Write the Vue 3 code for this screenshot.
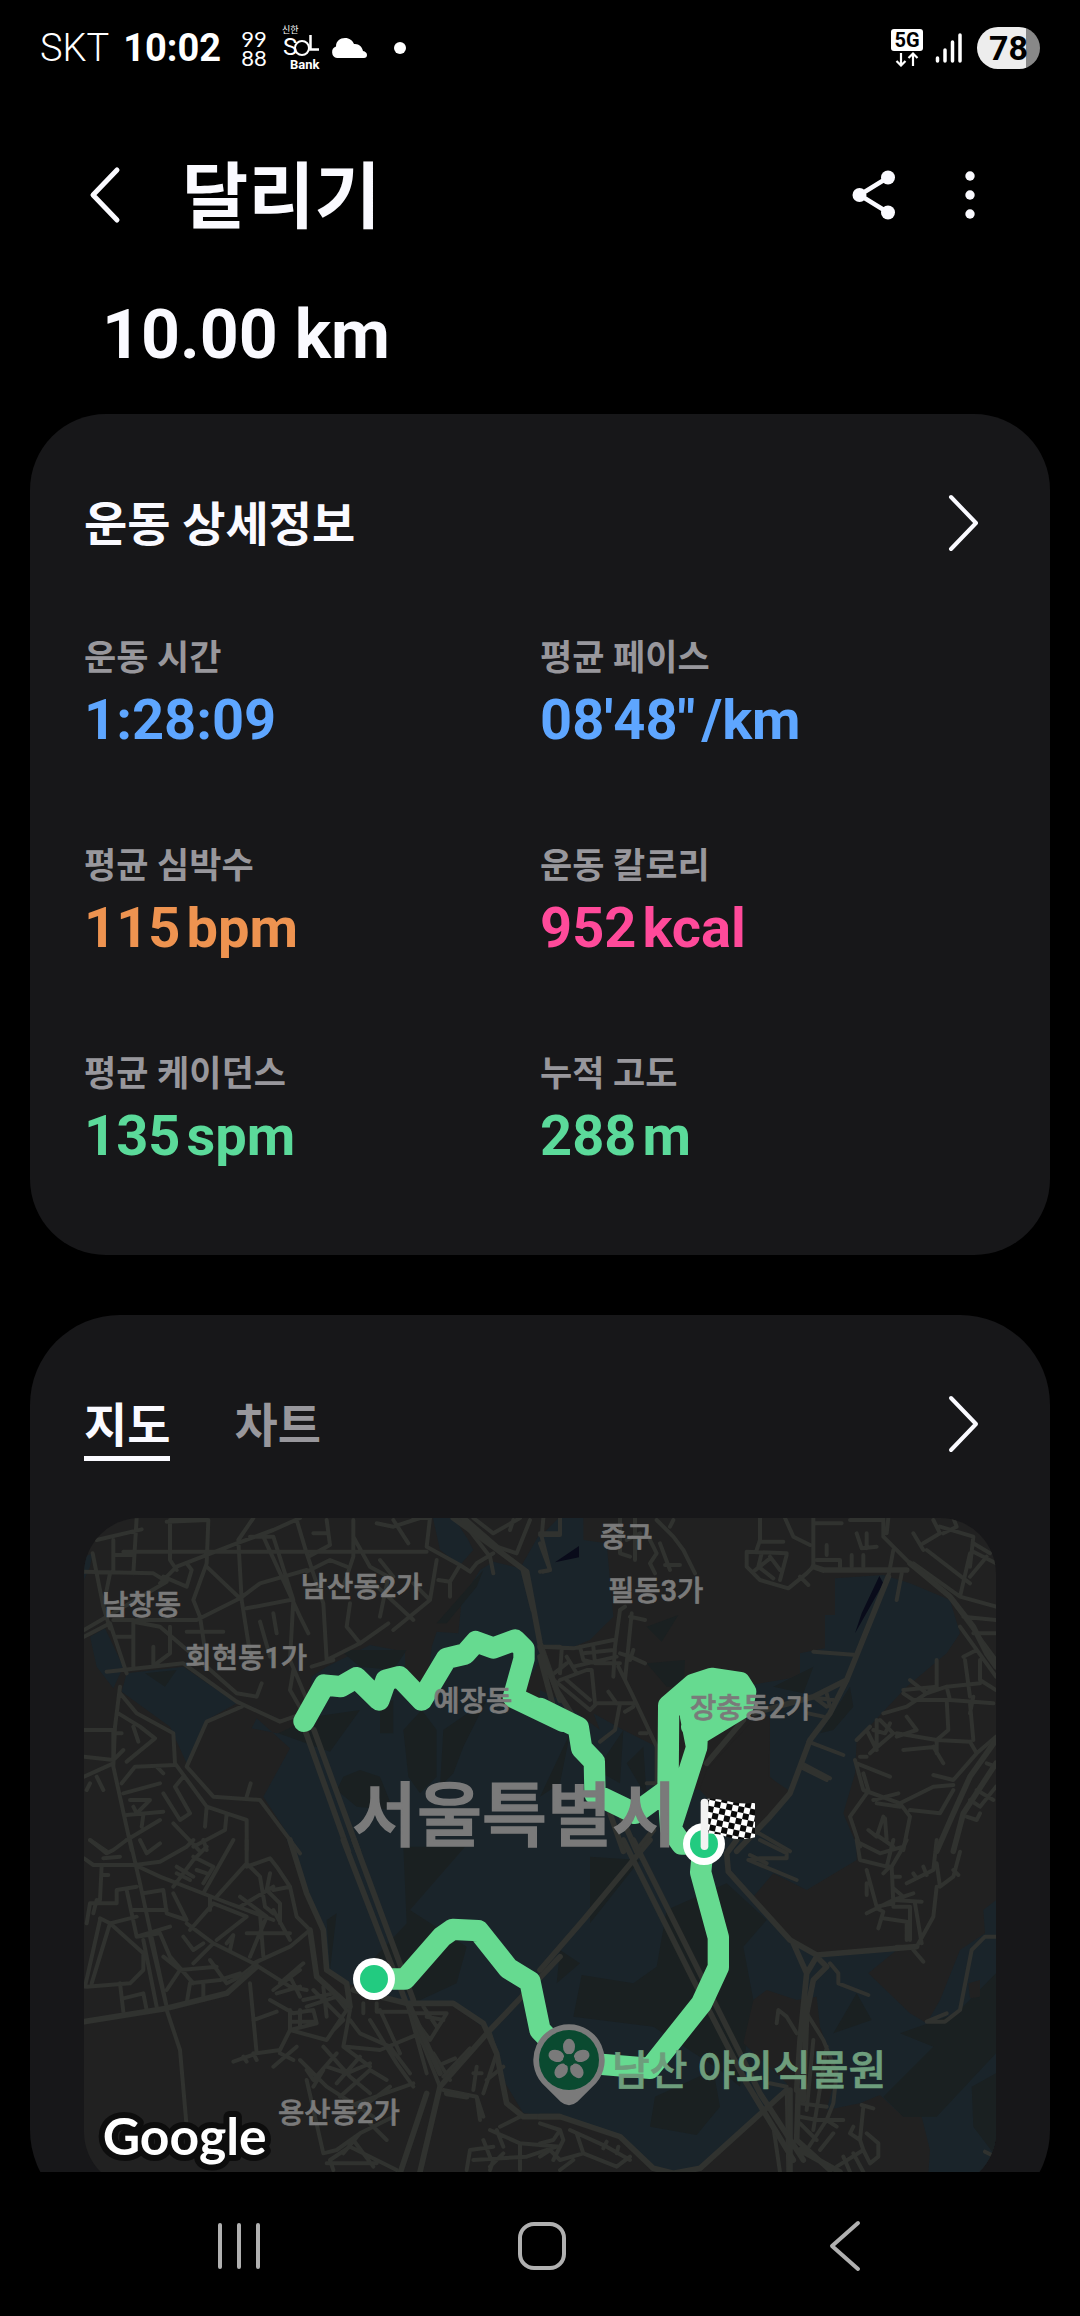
<script setup>
import { ref } from 'vue'

const activeTab = ref('map')
const tabs = [
  { id: 'map', label: '지도' },
  { id: 'chart', label: '차트' },
]

const stats = [
  { label: '운동 시간', value: '1:28:09', unit: '', color: 'blue' },
  { label: '평균 페이스', value: '08\'48"', unit: '/km', color: 'blue' },
  { label: '평균 심박수', value: '115', unit: 'bpm', color: 'orange' },
  { label: '운동 칼로리', value: '952', unit: 'kcal', color: 'pink' },
  { label: '평균 케이던스', value: '135', unit: 'spm', color: 'green' },
  { label: '누적 고도', value: '288', unit: 'm', color: 'green' },
]

// the map is split into four tiles, every tile has its own origin
const NW = 'translate(-72 -54)'
const NE = 'translate(1368 -54)'
const SW = 'translate(-72 966)'
const SE = 'translate(1368 966)'

const parks = [
  {
    tile: NW,
    d: 'M1118 50H1180L1225 120 1240 150 1200 195 1140 150Z M1300 185 1260 210 1205 300 1195 400 1130 395 1115 440 1100 590 1035 560 1035 455 930 435 800 500 755 530 740 690 650 700 575 685 590 655 690 745 610 890 720 1060H1500V690L1390 570 1440 480V100L1380 205Z M200 520 370 500 530 610 440 660 380 790 330 680 185 575Z M90 410 135 385 190 500 160 565 110 500Z M72 170 98 160 90 200 72 240Z',
  },
  {
    tile: NE,
    d: 'M0 110 60 50H130V120L200 130 220 350 200 370 150 420 90 445 0 440Z M0 570 60 600 180 690 160 640 250 690 350 740 360 850 480 870 560 960 650 980 745 880 690 830V650L610 640 600 560 780 530V460L855 445V345H885V235L1030 225 1110 250 1230 300 1260 400 1220 460 1100 560 950 720 945 820 910 940 960 1060H0Z',
  },
  {
    tile: SW,
    d: 'M680 0 740 160 790 270 800 390 860 430 1040 490 1180 490 1290 580 1330 720 1390 820 1500 830V0Z',
  },
  { tile: SE, d: 'M0 0H1368V996H0Z' },
]

const woods = [
  {
    tile: NW,
    d: 'M255 520 350 510 315 560Z M655 700 760 650 900 630 810 755Z M960 620 1000 600V700H960Z M1030 690 1085 630 1130 690V830L1080 880 1045 830Z M1150 690 1280 600 1210 740 1180 820 1140 860Z M840 450 1040 450 1000 510 900 500Z M850 830 900 810 960 830 1000 930 890 920 830 870Z M1270 210 1130 370 1160 370 1250 260Z',
  },
  {
    tile: NE,
    d: 'M320 380 415 345 365 425Z M320 490 435 480 430 560 380 560Z M840 700 930 560 940 620 880 690Z M0 890 90 700 60 850Z M170 810 250 690 240 850Z M260 790 310 740 320 890Z M700 560 820 500 790 580Z',
  },
  {
    tile: SW,
    d: 'M1030 20H1215L1050 210 1220 320 1190 430 1060 490 1000 400 900 400 1040 250Z M800 240 830 220 810 390Z',
  },
  {
    tile: SE,
    d: 'M150 50 300 60 150 250Z M60 330 120 370 50 430Z M125 405 280 430 350 380 380 210 560 130 680 240 610 320 640 480 600 740 540 690 340 560 100 530Z M345 770 520 690 540 800 470 885 330 860Z M950 460 995 540 880 580Z M1080 580 1250 520 1368 400V640L1190 830H1090L1030 770 1180 620Z M1295 740 1368 700V950L1300 860Z M755 210 835 160 770 245Z',
  },
]

const blocks = [
  { tile: NE, d: 'M500 810 640 660 690 650 685 830 745 870 745 890 650 980 570 930 480 865Z M590 560 640 550 640 640Z' },
  {
    tile: SE,
    d: 'M640 170 700 100 800 150 950 60V0H1368V180L1330 210 1335 280 1260 330 1200 480 1160 550 1110 520 985 400 1070 330 850 345 750 310Z M480 985 740 750V730L610 610 640 480 680 450 770 480 830 470 840 560 890 700 860 810 960 790 1020 765 1090 830H1145L1170 930 1165 1000H460Z M0 830H60L240 890 340 985 400 1000H0Z M1285 430 1320 420V470L1290 475Z',
  },
]

const ponds = [{ tile: NE, d: 'M45 187 117 138V172Z M1018 228 1030 250 945 400 965 340Z' }]

const streets = [
  {
    tile: NW,
    d: 'M230 54 220 220 M160 120V215 M110 120 245 88 M165 165H215 M98 160 130 320 150 385 M72 215 280 220 320 245 72 390 M72 410 150 370 200 520 M160 360H220V500 M170 410H220 M320 65 445 60 330 60 330 180 350 210 M445 60 440 190 400 300 420 350 435 450 M440 200 545 300 535 120 580 54 M300 250 350 200 530 130 640 90 720 54 M310 230 380 260 395 210 380 190 M150 220 130 320 M230 360 410 360 540 295 600 250 740 210 M220 365 300 380 440 500 M330 380V460L290 490 M280 440V500 M380 395H490 M140 515 370 490 530 605 660 665 730 640 M545 300 570 460 M560 325 690 300 M600 365 630 470 M640 340 650 400 M570 110 640 110 700 300 690 480 745 610 M610 110 720 350 745 400 M710 60 740 160 790 310 800 480 M745 170 810 135 800 60 M760 100H800 M740 215 810 180 860 200 M880 60 880 170 850 260 M880 110 930 200 985 230 M930 240 1060 360 M985 230 960 350 M960 180 1000 230 M950 70 1000 80 1080 54 M1000 60 1045 130 M1060 54 1110 54 1100 140 1200 195 M1050 155H1100 1035 190 1040 240 M1130 180 1110 300 M1135 240 1170 245 1200 195 1230 215 1250 190 1300 160 M1170 245V290 M1060 250 1110 300 1000 390 M870 310 860 380 900 430 M800 480 900 430 985 370 M755 500 820 480 M700 510 690 570 730 640 M440 500 530 580 590 590 605 550 M545 620 440 665 380 800 460 890 600 900 720 1060 M72 690H160V780 M180 560 165 680 160 800 215 1050 M180 580 230 640 340 700 345 790 440 920 500 940 560 960V1050 M175 640 240 680 285 715 200 785 M220 680 235 725 M160 780 190 750 M165 700H185 M72 770 160 780 M72 830 160 790 M90 850 80 870 M110 830 130 870 M190 880 300 850 M185 850 225 800 345 795 M310 880 360 960 390 940 345 860 370 830 M210 900 270 900 230 940 220 920 M200 945 310 935 M250 945 245 980 M300 960 200 1020 M440 920 435 980 M500 940 495 990 400 1040 M90 1020 140 1054 M340 970 420 1054 M560 890 572 850 M290 800 310 820 M1200 54 1290 170 1300 220 M1240 54 1300 100 1380 54 M1310 140 1370 160 1410 60 M1360 60 1350 90 M1450 54 1445 110 1470 210 1440 215 M1440 100 1500 100 M1440 440H1500',
  },
  {
    tile: NE,
    d: 'M0 130 30 210 10 215 M60 54V105H0 M240 54V160L270 170 M285 54V180 M260 120 300 100 M350 60 400 110 430 150 465 220 M330 120 350 160 330 190 345 220 M360 130 390 210 M375 195H420 M400 60 390 80 M270 350 315 360 M225 440 240 330 M240 330 255 320 M255 540 275 340 M0 440 100 445 220 420 M65 450 60 520 M120 440 130 480 170 490 M80 470 110 520 M100 500 230 470 M160 440 165 490H240 M130 460 220 450 M225 440 220 530 M240 460 270 470 315 490 M280 450 270 480 M60 540 140 510 155 510 165 610 M80 490 30 530 150 630 170 610 280 610 M80 540 150 600 M235 500 275 580 350 740 350 850H320 M240 610 225 690 180 725 M205 575 230 610 M255 635 280 620 M300 700 320 700 M660 54V120L650 150 M620 155 740 160 M620 155V200L660 240 745 265 800 220 820 200 M740 165 720 240 M690 175 640 215 M665 160 655 200 700 235 M690 170 720 210 M660 125H730 M735 54 760 110 810 135 M820 54V200 M820 70H905 M780 230 805 255 M830 180H900V205 M860 135V165 M935 165V200 M970 165V200 M930 60H1030 M950 100 965 145 1010 140 M980 100V145 M1030 54V110L1110 190 M1045 54 1040 100 M1060 150 1045 230 M1085 220 1070 300 M820 455 950 465 M1120 100 1150 150 M1160 150 1290 250 M1120 190 1260 290 M1150 130 1200 100 1180 60 M1200 80 1300 110 1290 200 M1210 100 1250 80 1240 54 M1290 160 1260 290 1368 320 M1300 155 1368 190 M1290 230 1340 170 M1300 130 1350 160 M1270 350 1368 360 M1300 400 1368 400 M1250 320 1368 480 M1260 380 1368 530 M1190 480V560L1090 570 M1110 540 1160 580 1220 560 1230 600 M1230 600 1120 600 1090 580 M1190 560 1100 620 1030 640 M1270 470 1310 450 M1275 480 1290 590 M1320 480V540L1368 570 M1220 560 1320 550 M1230 600 1360 610 M1300 590 1290 640 M1290 610 1300 720 M1220 600 1225 690 1190 720 1190 760 M1070 700 1190 720 1290 725 M1090 750 1190 740 M1070 710 1130 690 1100 650 M1180 740 1210 790 M1010 660 1010 740 990 760 1060 700 1020 660 M1000 690 1035 700 1050 670 M980 690 1010 750 M950 720 990 680 M1290 725 1310 760 1368 710 M1310 760 1240 840 1180 825 M950 790 1050 830 M960 770 980 770 M945 780 970 870 1080 910 1180 860 1240 855 M970 820 985 870 M1080 910 1110 950 1090 1050 M980 880 930 950 960 1040 M1000 900 1075 880 M1010 910 1080 920 M1110 930 1200 940 1240 870 M1030 950 1010 1010 985 990 M1035 955 1040 1020 M1010 1005 1060 1040 M1290 900 1320 920 1368 860 M1280 950 1310 960 1320 940 M1310 870 1360 900 M1340 790 1368 800 M805 725 910 765 M785 790 870 835 M780 800 860 840 M820 590 860 620 M805 640 850 650 M800 590 880 600 M860 580 870 620 M640 990 750 1054',
  },
  {
    tile: SW,
    d: 'M90 0 140 40 160 30 200 0 M125 75 120 180 M130 105H145 M72 55 100 75H225 M130 55 180 50 M225 75 300 65 380 20 400 0 M240 0 260 40 300 10 M210 0 240 130 320 500 M225 75 300 110 480 180 640 240 M430 160 520 0 M470 170 560 70 M430 0 440 30 M560 0V70L600 110 615 200 640 220 M560 80 630 55 650 80 690 140 710 230 750 270 M340 140 400 60 440 20 M350 80 400 110 M400 50 460 80 430 130 M350 100 390 120 M410 90 440 100 M90 190H170V150L230 140 M80 250 90 190 M110 180 100 220 M120 235 150 250 230 230 M75 440 120 240 M95 430 150 250 M150 250 250 340 M200 150 230 290 300 280 M220 210H320 320 220 M250 160 310 150 320 220 380 240 340 160 M330 260 230 290 M300 280 330 350 400 430 M250 300 290 500 M270 290 320 500 M380 250 460 310 400 370 M370 290 400 330 430 310 M390 270 460 190 560 230 470 300 M450 170 450 210 M250 340 250 390 210 430 80 440 M180 430 190 515 M190 475 250 460 260 510 M310 350 360 390 320 450 M360 390 470 380 M390 430 480 420 540 400 M390 430 380 490 M430 430 430 480 M460 310 580 370 690 320 750 270 M500 310 520 285 510 330 M450 360 500 430 540 410 590 370 M540 170 620 230 570 350 M540 200 640 140 M560 280H690 M600 220 610 350 M630 100 620 150 660 190 660 250 M690 140 640 150 M640 210 690 300 M580 370 690 440 740 450 M640 450 720 390 M660 430 730 370 M690 410 720 470 M650 460 720 440 M630 480 700 520 760 510 M690 510 690 570 770 550 760 510 M690 545H760 M720 510V560 M570 430 590 640 660 630 690 570 800 600 860 510 M580 540 650 515 M520 665 590 640 M550 650 560 665 M580 640 590 660 M640 680 710 620 M660 640 700 660 M730 480 820 460 860 510 M740 500 830 470 M790 440 800 530 M760 450 850 540 820 570 M870 510 850 620 930 680 M870 540 900 580 990 620 1050 700 M910 490V520 M950 490V515H1050 M960 510 1020 640 M930 540 1010 670 1060 740 M860 620 960 630 1080 580 M790 620 870 710 930 760 M720 660 800 740 940 830 M740 690 760 720 830 640 M760 740 790 690 M800 680 860 700 930 670 M830 730 900 650 M840 770 930 690 980 720 M890 790 1060 730 M870 830 990 740 M740 720 790 940 830 930 900 880 M800 970H950 M820 990 810 960 870 920 1010 990 M850 940 900 880 1000 830 M880 900 940 980 M930 850 980 900 M1060 520 1160 520 1110 600 1080 560 M1090 500 1130 560 M1100 530 1150 540 M1040 490 1140 740 M1050 520 1100 700 M1120 640 1170 720 M1150 670 1185 655 M1230 625 1150 710 M1250 680 1240 750 M1150 750 1250 770 1270 830 M1240 700 1265 700 M1280 720 1330 680 M1290 580 1310 640 1270 760 M1290 870 1380 910 1500 920 M1310 870 1330 920 M1320 860 1380 830 M1380 910V990 M1220 990 1230 930 1300 920 M1240 960 1400 950 1490 920 M1270 900 1290 950 M1290 980 1330 940 M1300 960 1290 990 M1250 770 1260 840 M320 510 360 630 380 860',
  },
  {
    tile: SE,
    d: 'M0 850 60 870 70 900 40 960 M0 910 40 900 60 870 M0 950 30 930 60 960 M90 870 200 920 270 960 M110 880 130 940 60 960 M130 940 230 980 270 950 M200 905 190 925 M235 920 230 940 M60 990 100 960 M660 0 740 40 740 55H660L625 60 770 120 M630 45 680 70 M950 0 960 60 1040 80 1060 0 M960 10 1020 40 1090 20 M980 90 1010 200 1060 190 1055 80 1090 20 1100 0 M1030 100 1050 80 M1060 110H1080 M1100 130 1180 90 1190 0 M1120 100 1130 115 M1150 80 1160 105 M1260 35 1240 110 1200 140 1190 70 M1240 90 1255 105 M1190 140 1180 230 1130 320 1070 320 M980 220 1010 205 1060 180 1120 160 M1060 180 1145 185 M1060 145 1090 170 M1010 205 1030 215 1015 265 M1030 235 1100 245V300 M1060 200H1110V300 M1125 190 1145 310 M980 130V165 M1120 330 1150 365 M870 370 895 400 895 430 985 465 M1368 290H1335L1295 330 1260 510 1215 545H1160L1220 520 M710 550 715 510 740 530 770 580 M800 520 850 600 890 700 880 790 860 840 800 930 M820 600 800 810 M860 620 820 870 M780 790 860 800 M780 830 830 840 910 840 M860 840 890 860 M880 880 840 930 M970 800 960 900 930 880 940 860 M965 795 1000 805 M960 900 970 930 890 980 M980 880 1015 910V950L990 970 970 930 M910 950 930 996 M940 940 970 996 M690 730 740 740 M700 860 720 996 M740 740 745 996 M780 850 830 900 M1335 935 1355 945',
  },
]

const avenues = [
  {
    tile: NW,
    d: 'M1180 54 1300 140 1400 215 1440 430 1500 600 M1210 54 1320 150 M1390 210 1420 330 M735 690 865 1054 M762 690 895 1054',
  },
  {
    tile: NE,
    d: 'M0 440 50 570 100 650 M0 470 40 620 M1110 190 1230 290 1300 380 1340 460 1368 500 M850 210H1100 M820 200 850 210 M1045 230 920 540 870 640 810 720 750 880 690 950 590 1054 M820 590 920 540 M640 640 820 590 M610 660 500 790 M1368 720 1290 830 1240 940 1190 1054 M1368 790 1270 940 1240 1054 M210 940 250 1054 M240 940 290 1054 M340 990 290 1054',
  },
  {
    tile: SW,
    d: 'M850 0 1035 480 M882 0 1060 480 M690 0 740 160 790 270 800 390 860 430 870 500 M750 270 770 410 870 500 M72 545 320 505 500 460 590 380 M880 450 1040 490 1180 490 1270 550 1310 640 1340 790 1390 830 1500 830 M1500 350 1290 570 1140 740 1080 996 M1050 500 1140 700 M1100 760 1020 1000 M1220 770 1160 760',
  },
  {
    tile: SE,
    d: 'M250 0 460 420 620 730 760 960 M280 0 500 440 660 760 790 960 M330 0 130 240 0 390 M590 0 560 40 565 95 750 300 830 345 1130 320 M760 310 800 400 780 600 770 750 M800 400 830 350 860 380 820 420 800 520 790 780 M740 750 480 985 400 1000 340 985 240 890 60 830H0 M750 750V996 M775 750 770 900 870 990 M780 930 900 996',
  },
]

const route = [
  {
    tile: NW,
    d: 'M732 664 793 555 842 560 889 533 957 600 978 540 1018 530 1085 600 1160 475 1215 462 1248 425 1300 444 1365 420 1392 447V477L1360 592 1510 664',
  },
  {
    tile: NE,
    d: 'M0 625 115 682 125 745 163 785 165 882 285 940 384 868 386 617 460 553 515 535 600 548 617 575 608 622 472 705 470 742 392 985 425 1032 492 1032 M384 868 392 985 M400 620 490 575 590 590 470 650 455 680 M500 600 600 600 M470 742 452 650',
  },
  { tile: SW, d: 'M942 417H1035L1146 290 1178 268 1255 272 1345 385 1410 425 1440 570 1527 660' },
  { tile: SE, d: 'M490 10 482 97 535 292V382L485 490 330 685 87 665' },
]

const places = [
  { name: '남창동', tile: NW, x: 126, y: 346 },
  { name: '남산동2가', tile: NW, x: 722, y: 290 },
  { name: '회현동1가', tile: NW, x: 376, y: 503 },
  { name: '예장동', tile: NW, x: 1120, y: 632 },
  { name: '중구', tile: NE, x: 180, y: 140 },
  { name: '필동3가', tile: NE, x: 204, y: 302 },
  { name: '장충동2가', tile: NE, x: 450, y: 655 },
  { name: '용산동2가', tile: SW, x: 654, y: 850 },
]

const petals = [0, 72, 144, 216, 288]
</script>

<template>
  <div class="screen">
    <header class="status">
      <div class="status-left">
        <span class="carrier">SKT</span>
        <span class="clock">10:02</span>
        <span class="app-9988"><span>99</span><span>88</span></span>
        <svg class="sol" viewBox="0 0 46 50" aria-hidden="true">
          <text x="1" y="10" class="sol-top">신한</text>
          <text x="2" y="32" class="sol-main">S</text>
          <circle cx="21" cy="25" r="7" fill="none" stroke="#fff" stroke-width="2" />
          <path d="M29.500 12V26.500H38" fill="none" stroke="#fff" stroke-width="2.500" />
          <text x="9" y="46" class="sol-bank">Bank</text>
        </svg>
        <svg class="cloud" viewBox="0 0 36 22" aria-hidden="true">
          <path d="M6 21a6 6 0 0 1-1-11.500C5 4 9 1 14 1c4.500 0 7.500 2.500 9 6 5-.5 8 2.500 9 7 2.500.5 4 2 4 4 0 1.800-1.200 3-3 3z" fill="#fff" />
        </svg>
        <span class="dot"></span>
      </div>
      <div class="status-right">
        <svg class="net" viewBox="0 0 32 38" aria-hidden="true">
          <rect width="32" height="22" rx="3" fill="#fff" />
          <text x="16" y="18" text-anchor="middle">5G</text>
          <path d="M10 24V36M5.500 32 10 36.500 14.500 32M22 37V25M17.500 29 22 24.500 26.500 29" fill="none" stroke="#fff" stroke-width="2.200" />
        </svg>
        <svg class="signal" viewBox="0 0 28 30" aria-hidden="true">
          <path d="M2.500 25V28M10 17V28M17.500 9V28M25 2V28" stroke="#fff" stroke-width="3.500" stroke-linecap="round" />
        </svg>
        <span class="battery">78</span>
      </div>
    </header>

    <nav class="toolbar">
      <button class="icon" aria-label="뒤로">
        <svg viewBox="0 0 64 64"><path d="M45 7 21 32 45 57" fill="none" stroke="#fafaff" stroke-width="5" stroke-linecap="round" stroke-linejoin="round" /></svg>
      </button>
      <h1>달리기</h1>
      <button class="icon" aria-label="공유">
        <svg viewBox="0 0 64 64" fill="#fafaff">
          <path d="M46 14.500 17.500 32 46 49.500" fill="none" stroke="#fafaff" stroke-width="4.500" />
          <circle cx="17.500" cy="32" r="7" />
          <circle cx="46" cy="14.500" r="7" />
          <circle cx="46" cy="49.500" r="7" />
        </svg>
      </button>
      <button class="icon" aria-label="더보기">
        <svg viewBox="0 0 64 64" fill="#fafaff">
          <circle cx="32" cy="13" r="4.700" />
          <circle cx="32" cy="32" r="4.700" />
          <circle cx="32" cy="51" r="4.700" />
        </svg>
      </button>
    </nav>

    <main>
      <p class="distance">10.00 km</p>

      <section class="card">
        <div class="card-head">
          <h2>운동 상세정보</h2>
          <button class="icon" aria-label="운동 상세정보 보기">
            <svg viewBox="0 0 64 64"><path d="M19 6 44 32 19 58" fill="none" stroke="#fafaff" stroke-width="4" stroke-linecap="round" stroke-linejoin="round" /></svg>
          </button>
        </div>
        <dl class="stats">
          <div v-for="stat in stats" :key="stat.label">
            <dt>{{ stat.label }}</dt>
            <dd :class="stat.color">
              {{ stat.value }}<span v-if="stat.unit" class="unit">{{ stat.unit }}</span>
            </dd>
          </div>
        </dl>
      </section>

      <section class="card map-card">
        <div class="card-head">
          <div class="tabs" role="tablist">
            <button
              v-for="tab in tabs"
              :key="tab.id"
              class="tab"
              :class="{ active: activeTab === tab.id }"
              role="tab"
              :aria-selected="activeTab === tab.id"
              @click="activeTab = tab.id"
            >
              {{ tab.label }}
            </button>
          </div>
          <button class="icon" aria-label="지도 보기">
            <svg viewBox="0 0 64 64"><path d="M19 6 44 32 19 58" fill="none" stroke="#fafaff" stroke-width="4" stroke-linecap="round" stroke-linejoin="round" /></svg>
          </button>
        </div>

        <svg class="map" viewBox="0 0 2736 2010">
          <defs>
            <pattern id="checker" width="36" height="36" patternUnits="userSpaceOnUse" patternTransform="rotate(12)">
              <rect width="36" height="36" fill="#fff" />
              <path d="M0 0H18V18H0Z M18 18H36V36H18Z" fill="#0a0a0a" />
            </pattern>
          </defs>
          <path v-for="(p, i) in parks" :key="'park' + i" :d="p.d" :transform="p.tile" fill="#1a242a" />
          <path v-for="(p, i) in woods" :key="'wood' + i" :d="p.d" :transform="p.tile" fill="#1a2021" />
          <path v-for="(p, i) in blocks" :key="'block' + i" :d="p.d" :transform="p.tile" fill="#212121" />
          <path v-for="(p, i) in ponds" :key="'pond' + i" :d="p.d" :transform="p.tile" fill="#090b1a" />
          <g class="streets">
            <path v-for="(p, i) in streets" :key="i" :d="p.d" :transform="p.tile" />
          </g>
          <g class="avenues">
            <path v-for="(p, i) in avenues" :key="i" :d="p.d" :transform="p.tile" />
          </g>
          <g class="route">
            <path v-for="(p, i) in route" :key="i" :d="p.d" :transform="p.tile" />
          </g>

          <text v-for="p in places" :key="p.name" :x="p.x" :y="p.y" :transform="p.tile" class="place">{{ p.name }}</text>
          <text x="804" y="968" class="city">서울특별시</text>
          <text x="1584" y="1700" class="garden">남산 야외식물원</text>

          <!-- botanical garden pin -->
          <g :transform="SE">
            <path d="M87 553a107 107 0 0 1 81 177L112 785Q87 806 62 785L6 730A107 107 0 0 1 87 553Z" fill="#7a7a7a" />
            <circle cx="87" cy="660" r="90" fill="#0a4a30" />
            <g transform="translate(87 660)" fill="#7a7a7a">
              <ellipse v-for="a in petals" :key="a" cy="-40" rx="18" ry="24" :transform="`rotate(${a})`" />
              <circle r="18" fill="#0a4a30" />
            </g>
          </g>

          <!-- start -->
          <g :transform="SW">
            <circle cx="942" cy="417" r="63" fill="#fff" />
            <circle cx="942" cy="417" r="42" fill="#22cb80" />
          </g>

          <!-- finish -->
          <g :transform="NE">
            <circle cx="492" cy="1032" r="63" fill="#fff" />
            <circle cx="492" cy="1032" r="42" fill="#22cb80" />
            <path d="M500 897C550 892 580 918 645 908V1012Q600 1024 560 1010 530 998 500 1001Z" fill="url(#checker)" />
            <rect x="482" y="896" width="23" height="154" rx="11" fill="#f2f2f2" />
          </g>

          <text x="56" y="1911" class="google">Google</text>
        </svg>
      </section>
    </main>

    <footer class="navbar">
      <button aria-label="최근 앱">
        <svg viewBox="0 0 64 64"><path d="M13 11V53M32 11V53M51 11V53" /></svg>
      </button>
      <button aria-label="홈">
        <svg viewBox="0 0 64 64"><rect x="10" y="10" width="44" height="44" rx="14" /></svg>
      </button>
      <button aria-label="뒤로 가기">
        <svg viewBox="0 0 64 64"><path d="M45 9 19 32 45 55" /></svg>
      </button>
    </footer>
  </div>
</template>

<style>
body {
  background: #000;
}
</style>

<style scoped>
.screen {
  display: flex;
  flex-direction: column;
  height: 100vh;
  overflow: hidden;
  background: #000;
  color: #fafaff;
  font-family: Roboto, 'Noto Sans CJK KR', sans-serif;
}
h1,
h2,
p,
dl,
dd {
  margin: 0;
}
button {
  padding: 0;
  border: 0;
  background: none;
  color: inherit;
  font: inherit;
}
svg {
  display: block;
}

.status {
  display: flex;
  justify-content: space-between;
  align-items: center;
  height: 96px;
  padding: 0 40px;
  color: #fff;
}
.status-left,
.status-right {
  display: flex;
  align-items: center;
}
.carrier {
  font-size: 38px;
  font-weight: 300;
}
.clock {
  margin: 0 20px 0 14px;
  font-size: 38px;
  font-weight: 700;
}
.app-9988 {
  display: flex;
  flex-direction: column;
  font-family: Lato, sans-serif;
  font-size: 22px;
  line-height: 19px;
}
.sol {
  width: 46px;
  height: 50px;
  margin: 0 4px 0 14px;
}
.sol text {
  fill: #fff;
}
.sol-top {
  font-size: 9px;
}
.sol-main {
  font-size: 24px;
}
.sol-bank {
  font-size: 13px;
  font-weight: 700;
}
.cloud {
  width: 36px;
  height: 22px;
}
.dot {
  width: 12px;
  height: 12px;
  margin-left: 27px;
  border-radius: 50%;
  background: #fff;
}
.net {
  width: 32px;
  height: 38px;
}
.net text {
  font-size: 20px;
  font-weight: 700;
}
.signal {
  width: 28px;
  height: 30px;
  margin: 0 14px 0 12px;
}
.battery {
  width: 63px;
  border-radius: 21px;
  background: linear-gradient(90deg, #ededed 78%, #888 78%);
  color: #000;
  font-size: 34px;
  font-weight: 700;
  line-height: 42px;
  text-align: center;
}

.toolbar {
  display: flex;
  align-items: center;
  gap: 32px;
  height: 198px;
  padding: 0 78px 0 72px;
  margin-bottom: -32px;
}
.toolbar h1 {
  flex: 1;
  padding-top: 6px;
  margin-left: 14px;
  font-size: 72px;
  font-weight: 700;
  line-height: 96px;
}
.icon {
  flex: none;
  width: 64px;
  height: 64px;
}

main {
  flex: 1;
  min-height: 0;
  padding: 0 30px;
  overflow: hidden;
}
.distance {
  padding: 26px 72px 32px;
  font-size: 68px;
  font-weight: 700;
  line-height: 94px;
}
.card {
  padding: 77px 54px 84px;
  border-radius: 76px;
  background: #171719;
}
.card-head {
  display: flex;
  justify-content: space-between;
}
.card-head h2 {
  padding-top: 4px;
  font-size: 47px;
  font-weight: 700;
  line-height: 60px;
}
.stats {
  display: grid;
  grid-template-columns: 1fr 1fr;
  row-gap: 86px;
  margin-top: 78px;
}
.stats dt {
  color: #98979c;
  font-size: 35px;
  font-weight: 700;
  line-height: 52px;
}
.stats dd {
  font-size: 56px;
  font-weight: 700;
  line-height: 70px;
}
.unit {
  margin-left: 6px;
}
.blue {
  color: #5ea6ff;
}
.orange {
  color: #ee9350;
}
.pink {
  color: #ff4a9a;
}
.green {
  color: #5bda9a;
}

.map-card {
  margin-top: 60px;
  padding-bottom: 32px;
  border-radius: 90px;
}
.tabs {
  display: flex;
  gap: 64px;
}
.tab {
  padding-top: 4px;
  border-bottom: 5px solid transparent;
  color: #98979c;
  font-size: 47px;
  font-weight: 700;
  line-height: 60px;
}
.tab.active {
  border-color: #fafaff;
  color: #fafaff;
}
.map {
  width: 100%;
  margin-top: 57px;
  border-radius: 56px;
  background: #212121;
}
.streets,
.avenues,
.route {
  fill: none;
  stroke: #30322f;
  stroke-width: 12;
  stroke-linecap: round;
  stroke-linejoin: round;
}
.avenues {
  stroke-width: 17;
}
.route {
  stroke: #66da90;
  stroke-width: 64;
}
.place,
.city {
  fill: #7a7a7a;
  stroke: #7a7a7a;
  stroke-width: 2;
  font-size: 86px;
  font-weight: 500;
}
.city {
  font-size: 212px;
  stroke-width: 5;
}
.garden {
  fill: #6d9d7c;
  stroke: #6d9d7c;
  stroke-width: 2;
  font-size: 123px;
  font-weight: 500;
}
.google {
  fill: #fff;
  stroke: #0d0d0d;
  stroke-width: 36;
  stroke-linejoin: round;
  paint-order: stroke;
  font-family: Lato, sans-serif;
  font-size: 155px;
  font-weight: 700;
}

.navbar {
  display: flex;
  box-sizing: border-box;
  height: 144px;
  padding: 4px 84px 0 88px;
}
.navbar button {
  flex: 1;
  display: flex;
  justify-content: center;
  align-items: center;
}
.navbar svg {
  width: 64px;
  height: 64px;
  fill: none;
  stroke: #b0b0b0;
  stroke-width: 4;
  stroke-linecap: round;
  stroke-linejoin: round;
}
</style>
